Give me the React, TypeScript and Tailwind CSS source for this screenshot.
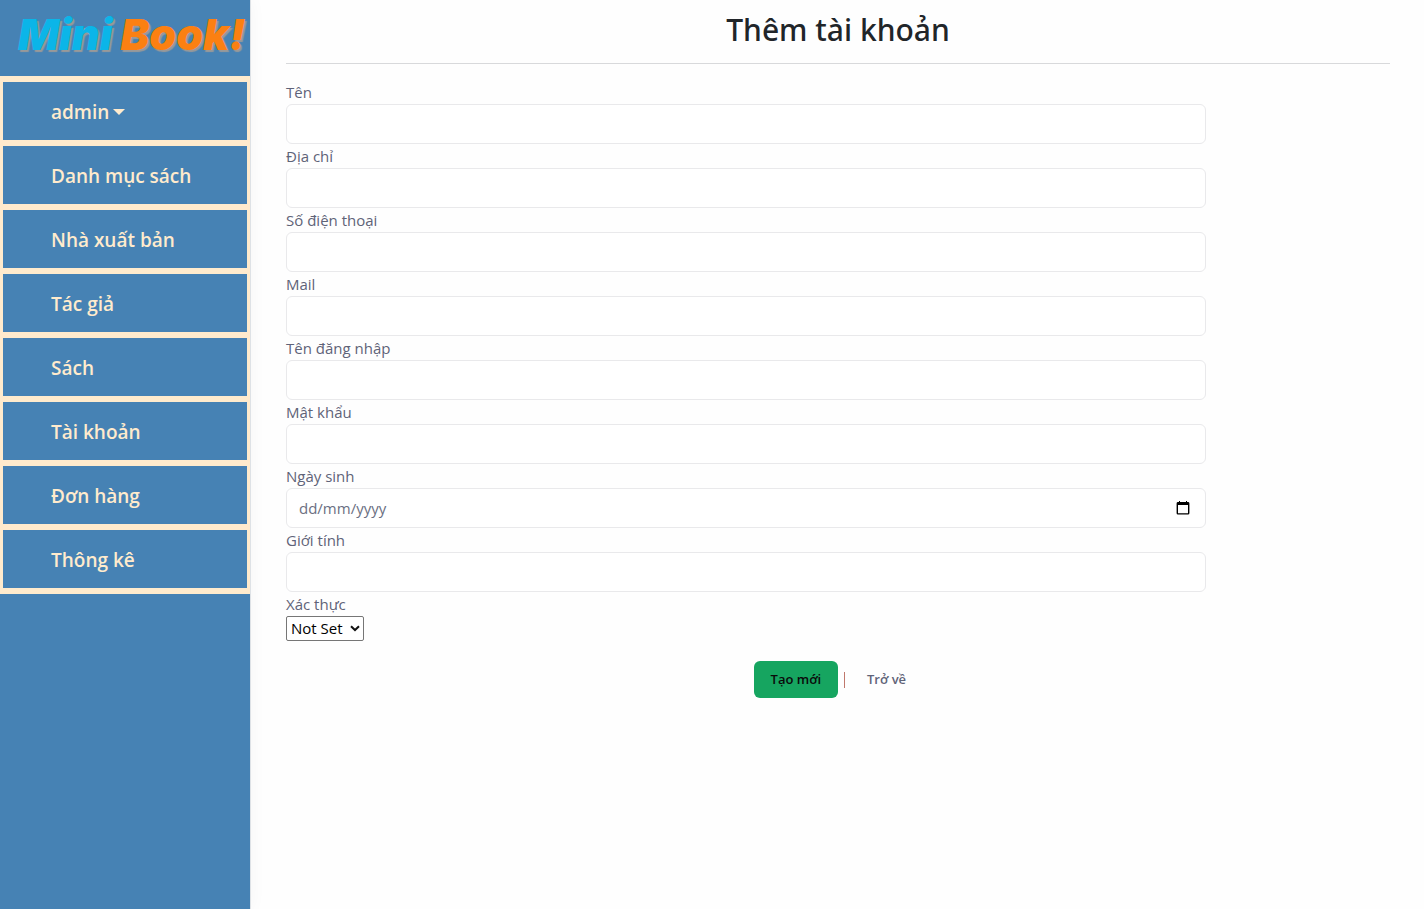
import React from "react";

const menu: string[] = [
  "Danh mục sách",
  "Nhà xuất bản",
  "Tác giả",
  "Sách",
  "Tài khoản",
  "Đơn hàng",
  "Thông kê",
];

type Field = { id: string; label: string; type: string };

const fields: Field[] = [
  { id: "name", label: "Tên", type: "text" },
  { id: "address", label: "Địa chỉ", type: "text" },
  { id: "phone", label: "Số điện thoại", type: "tel" },
  { id: "mail", label: "Mail", type: "email" },
  { id: "username", label: "Tên đăng nhập", type: "text" },
  { id: "password", label: "Mật khẩu", type: "password" },
  { id: "birthday", label: "Ngày sinh", type: "date" },
  { id: "gender", label: "Giới tính", type: "text" },
];

const itemClass =
  "flex h-16 w-full items-center border-3 border-[#ffebcd] pt-[2px] pl-12 text-left text-[19px] font-semibold text-[#ffebcd]";

function Logo() {
  return (
    <a
      href="#"
      className="flex h-[76px] items-start pl-[18px] pt-2 font-['Inter',sans-serif] text-[43px] leading-[52px] font-black whitespace-nowrap italic [text-shadow:2px_2px_1px_#999]"
    >
      <span className="text-[#0bb5e8]">Mini</span>
      <span className="ml-2 text-[#fb8012]">Book!</span>
    </a>
  );
}

function Sidebar() {
  return (
    <aside className="w-[251px] shrink-0 border-r border-[#dee2e6] bg-[#4682b4] shadow-[0_0_16px_rgba(0,0,0,0.04)]">
      <Logo />
      <nav className="border-y-3 border-[#ffebcd]">
        <button type="button" className={itemClass}>
          admin
          <svg className="ml-1 h-[6px] w-3" viewBox="0 0 12 6" aria-hidden="true">
            <path d="M0 0H12L6 6Z" fill="#ffebcd" />
          </svg>
        </button>
        {menu.map((label) => (
          <a key={label} href="#" className={itemClass}>
            {label}
          </a>
        ))}
      </nav>
    </aside>
  );
}

function FormField({ id, label, type }: Field) {
  const isDate = type === "date";
  return (
    <div>
      <label htmlFor={id} className="block h-6 leading-6">
        {label}
      </label>
      <div className="flex h-10 w-10/12 items-center rounded-md border border-[#e9e9eb] bg-white">
        <input
          id={id}
          type={isDate ? "text" : type}
          placeholder={isDate ? "dd/mm/yyyy" : undefined}
          className="h-full min-w-0 flex-1 rounded-md bg-transparent px-3 outline-none placeholder:text-[#6b6f82]"
        />
        {isDate && (
          <button type="button" aria-label="Chọn ngày" className="mr-[14px]">
            <svg width="16" height="16" viewBox="0 0 16 16" aria-hidden="true">
              <path
                fillRule="evenodd"
                d="M4 1h1v1h6V1h1v1h1a1.4 1.4 0 0 1 1.4 1.4v9.8A1.4 1.4 0 0 1 13 14.6H3a1.4 1.4 0 0 1-1.4-1.4V3.400A1.4 1.4 0 0 1 3 2h1ZM3 5v8.200h10V5Z"
                fill="#000"
              />
            </svg>
          </button>
        )}
      </div>
    </div>
  );
}

export default function App() {
  return (
    <div className="flex min-h-screen bg-[#fefefe] font-['Open_Sans',sans-serif] text-[15px] text-[#5f6378]">
      <Sidebar />
      <main className="min-w-0 flex-1 pr-[34px] pl-[35px]">
        <h1 className="border-b border-[#d8d9db] pt-2 pb-[11px] text-center font-['Noto_Sans',sans-serif] text-[30px] leading-[44px] font-medium text-[#212529]">
          Thêm tài khoản
        </h1>
        <form className="pt-4" onSubmit={(e) => e.preventDefault()}>
          {fields.map((field) => (
            <FormField key={field.id} {...field} />
          ))}
          <label htmlFor="verified" className="block h-6 leading-6">
            Xác thực
          </label>
          <div className="relative flex h-[25px] w-[78px]">
            <select
              id="verified"
              className="w-full appearance-none rounded-[2px] border border-[#767676] bg-white pl-1 text-black"
            >
              <option>Not Set</option>
              <option>True</option>
              <option>False</option>
            </select>
            <svg
              className="pointer-events-none absolute top-[9px] right-1 h-[7px] w-[10px]"
              viewBox="0 0 10 7"
              aria-hidden="true"
            >
              <path d="M1 1.200L5 5L9 1.200" fill="none" stroke="#111" strokeWidth="2" />
            </svg>
          </div>
          <div className="mt-5 flex items-center justify-center text-[13px] font-semibold">
            <button
              type="submit"
              className="h-[37px] w-[84px] rounded-md bg-[#16a560] text-[#0a0a0a]"
            >
              Tạo mới
            </button>
            <span className="mx-[6px] h-4 w-px bg-[#c0786c]" />
            <a href="#" className="px-4">
              Trở về
            </a>
          </div>
        </form>
      </main>
    </div>
  );
}
